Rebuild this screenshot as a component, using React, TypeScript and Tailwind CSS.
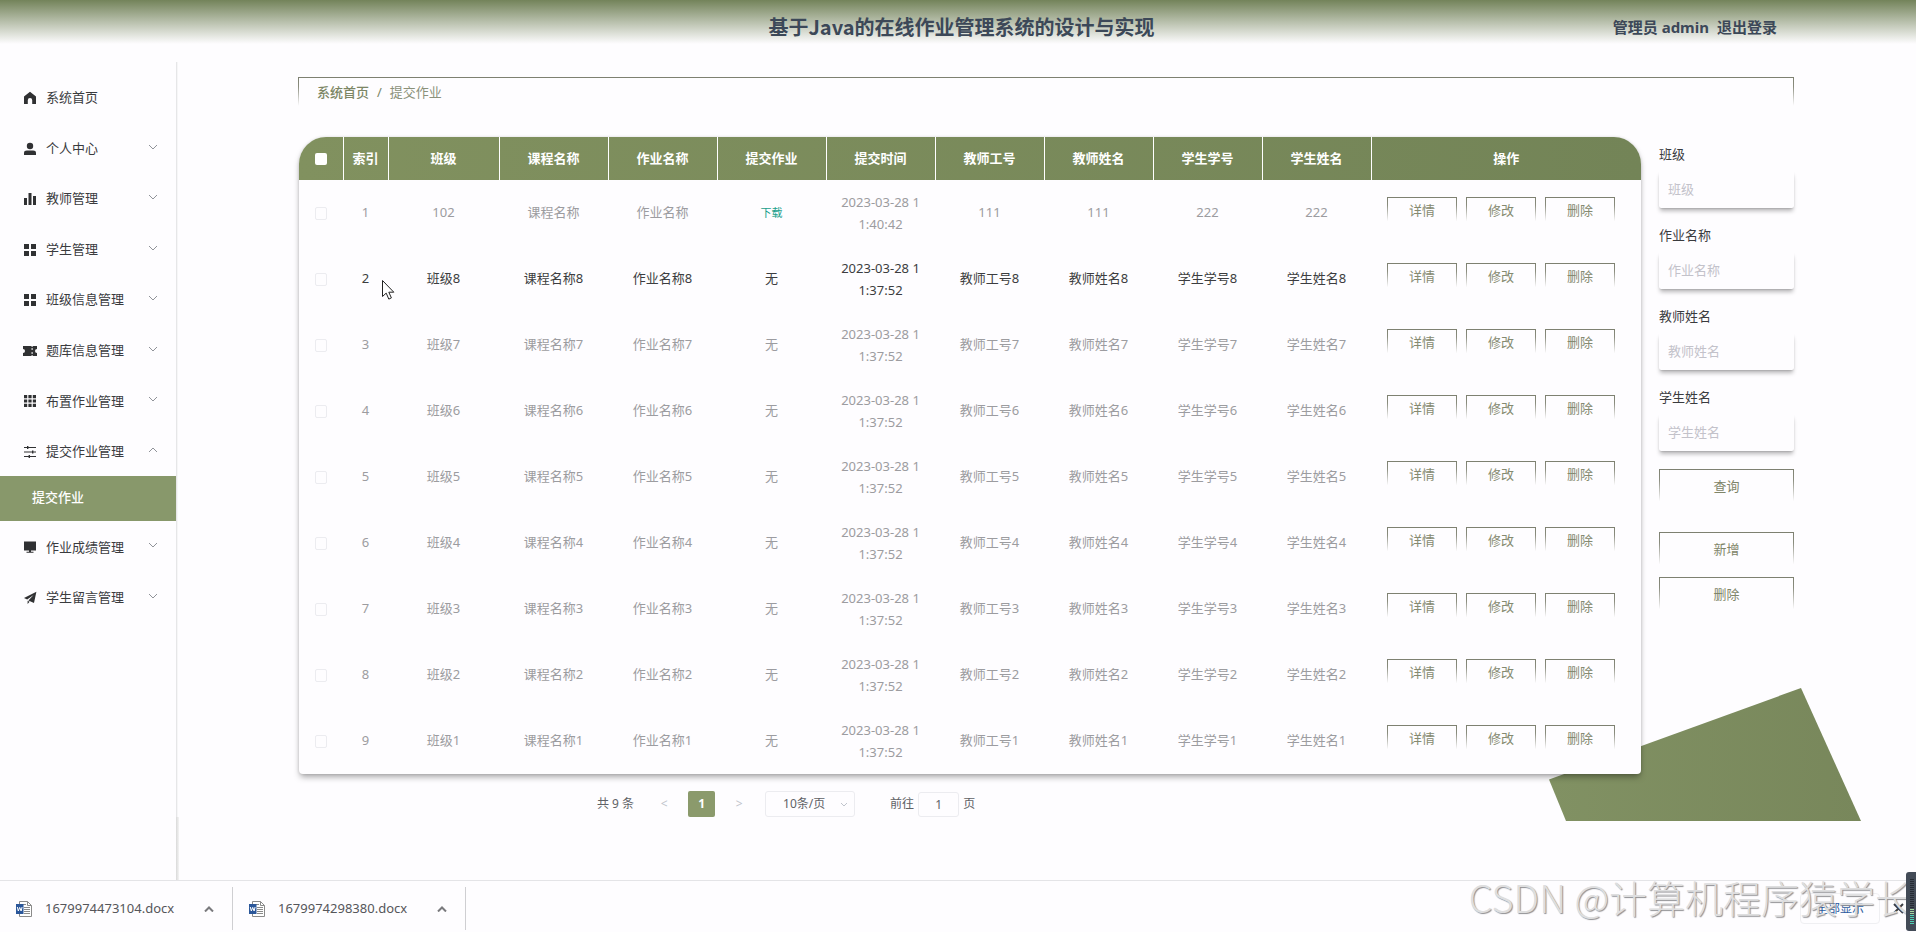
import { ReactNode, useState } from 'react';

interface MenuItem {
  label: string;
  icon: ReactNode;
  children?: string[];
  leaf?: boolean;
}

interface Homework {
  id: number;
  banji: string;
  kecheng: string;
  zuoye: string;
  file: boolean;
  time: string;
  gonghao: string;
  jiaoshi: string;
  xuehao: string;
  xuesheng: string;
}

const Icon = ({ children }: { children: ReactNode }) => (
  <svg viewBox="0 0 14 14" className="h-[14px] w-[14px] shrink-0 fill-[#303133]" aria-hidden="true">
    {children}
  </svg>
);

const GridIcon = () => (
  <Icon>
    <path d="M1 1h5v5H1zM8 1h5v5H8zM1 8h5v5H1zM8 8h5v5H8z" />
  </Icon>
);

const menu: MenuItem[] = [
  {
    label: '系统首页',
    leaf: true,
    icon: (
      <Icon>
        <path d="M7 .8 13 5.6V13H9.2V9.2a2.2 2.2 0 0 0-4.4 0V13H1V5.6z" />
      </Icon>
    ),
  },
  {
    label: '个人中心',
    icon: (
      <Icon>
        <circle cx="7" cy="4" r="3.2" />
        <path d="M1 13v-2.2C1 9.4 2.2 8.6 3.8 8.6h6.4c1.6 0 2.8.8 2.8 2.2V13z" />
      </Icon>
    ),
  },
  {
    label: '教师管理',
    icon: (
      <Icon>
        <path d="M1 6h3v7H1zM5.5 1h3v12h-3zM10 4h3v9h-3z" />
      </Icon>
    ),
  },
  { label: '学生管理', icon: <GridIcon /> },
  { label: '班级信息管理', icon: <GridIcon /> },
  {
    label: '题库信息管理',
    icon: (
      <Icon>
        <path d="M0 2h8.6v1h1V2H14v3a2 2 0 0 0 0 4v3H9.6v-1h-1v1H0V9a2 2 0 0 0 0-4zM8.6 4v2h1V4zM8.6 8v2h1V8z" fillRule="evenodd" />
      </Icon>
    ),
  },
  {
    label: '布置作业管理',
    icon: (
      <Icon>
        <path d="M1 1h3.2v3.2H1zM5.4 1h3.2v3.2H5.4zM9.8 1H13v3.2H9.8zM1 5.4h3.2v3.2H1zM5.4 5.4h3.2v3.2H5.4zM9.8 5.4H13v3.2H9.8zM1 9.8h3.2V13H1zM5.4 9.8h3.2V13H5.4zM9.8 9.8H13V13H9.8z" />
      </Icon>
    ),
  },
  {
    label: '提交作业管理',
    children: ['提交作业'],
    icon: (
      <Icon>
        <path d="M1 2h12v1H1zM1 6.5h12v1H1zM1 11h12v1H1zM4 1h1.4v3H4zM9 5.5h1.4v3H9zM5.6 10H7v3H5.6z" />
      </Icon>
    ),
  },
  {
    label: '作业成绩管理',
    icon: (
      <Icon>
        <path d="M1 1.5h12v9H1zM6 10.5h2v1.3h2.5v1h-7v-1H6z" />
      </Icon>
    ),
  },
  {
    label: '学生留言管理',
    icon: (
      <Icon>
        <path d="M13.4.8 1 7l3.2 1.6L10.6 4 5.4 9.4 11 12zM4.6 9.8V13l2-2.2z" />
      </Icon>
    ),
  },
];

const rows: Homework[] = [
  {
    id: 1,
    banji: '102',
    kecheng: '课程名称',
    zuoye: '作业名称',
    file: true,
    time: '2023-03-28 11:40:42',
    gonghao: '111',
    jiaoshi: '111',
    xuehao: '222',
    xuesheng: '222',
  },
  ...[8, 7, 6, 5, 4, 3, 2, 1].map((n, i) => ({
    id: i + 2,
    banji: `班级${n}`,
    kecheng: `课程名称${n}`,
    zuoye: `作业名称${n}`,
    file: false,
    time: '2023-03-28 11:37:52',
    gonghao: `教师工号${n}`,
    jiaoshi: `教师姓名${n}`,
    xuehao: `学生学号${n}`,
    xuesheng: `学生姓名${n}`,
  })),
];

const columns = ['班级', '课程名称', '作业名称', '提交作业', '提交时间', '教师工号', '教师姓名', '学生学号', '学生姓名'];
const filters = ['班级', '作业名称', '教师姓名', '学生姓名'];
const downloads = ['1679974473104.docx', '1679974298380.docx'];

const fadeBorder = 'border [border-image:linear-gradient(to_bottom,#7d8070_0%,#8a8c7e_30%,transparent_90%)_1]';

function Chevron({ up = false }: { up?: boolean }) {
  return (
    <svg viewBox="0 0 10 6" className="h-[6px] w-[10px] fill-none stroke-[#909399]" aria-hidden="true">
      <path d={up ? 'M1 5 5 1l4 4' : 'M1 1l4 4 4-4'} />
    </svg>
  );
}

function Sidebar() {
  return (
    <aside className="flex w-[179px] shrink-0">
      <nav className="flex-1 pt-[10px]">
        <ul className="flex h-[550px] flex-col justify-between">
          {menu.map((item) => (
            <li key={item.label}>
              <button type="button" className="flex h-[50px] w-full items-center gap-2 pt-[2px] pr-[18px] pl-[23px] text-[#3a3b3e]">
                {item.icon}
                <span className="ml-px">{item.label}</span>
                {!item.leaf && (
                  <span className="ml-auto pb-1">
                    <Chevron up={!!item.children} />
                  </span>
                )}
              </button>
              {item.children?.map((child) => (
                <a key={child} href="#" className="flex h-[45px] items-center bg-[#88986b] pb-[2px] pl-8 font-medium text-white">
                  {child}
                </a>
              ))}
            </li>
          ))}
        </ul>
      </nav>
      <div className="flex w-[3px] flex-col">
        <div className="w-[2px] flex-1 border-l border-[#e6e6e8] bg-[#f6f6f7]"></div>
        <div className="h-[63px] bg-linear-to-r from-[#d9d9d9] to-[#f4f4f4]"></div>
      </div>
    </aside>
  );
}

function HomeworkTable() {
  return (
    <div className="overflow-hidden rounded-t-[27px] rounded-b bg-[#fefdff] shadow-[0_4px_6px_-1px_rgba(0,0,0,0.34),0_0_3px_rgba(0,0,0,0.12)]">
      <table className="w-full table-fixed text-center">
        <colgroup>
          <col className="w-[44px]" />
          <col className="w-[45px]" />
          <col />
          {columns.slice(1).map((c) => (
            <col key={c} className="w-[109px]" />
          ))}
          <col className="w-[270px]" />
        </colgroup>
        <thead>
          <tr className="h-[43px] bg-linear-to-r from-[#81915f] to-[#738457] text-white">
            <th className="border-r border-white">
              <input
                type="checkbox"
                aria-label="全选"
                className="mx-auto mt-px block h-3 w-3 appearance-none rounded-xs bg-white"
              />
            </th>
            <th className="border-r border-white font-bold">索引</th>
            {columns.map((c) => (
              <th key={c} className="border-r border-white font-bold">{c}</th>
            ))}
            <th className="font-bold">操作</th>
          </tr>
        </thead>
        <tbody>
          {rows.map((row) => (
            <tr key={row.id} className={row.id === 2 ? 'h-[66px] text-[#3c3d40]' : 'h-[66px] text-[#9c9ca0]'}>
              <td>
                <input
                  type="checkbox"
                  aria-label={`选择 ${row.id}`}
                  className="mx-auto block h-[13px] w-3 appearance-none rounded-xs border border-[#ececf0]"
                />
              </td>
              <td>{row.id}</td>
              <td>{row.banji}</td>
              <td>{row.kecheng}</td>
              <td>{row.zuoye}</td>
              <td>
                {row.file ? <button type="button" className="text-[11px] text-[#1a9f8c]">下载</button> : '无'}
              </td>
              <td className="px-3 leading-[22px] break-all">{row.time}</td>
              <td>{row.gonghao}</td>
              <td>{row.jiaoshi}</td>
              <td>{row.xuehao}</td>
              <td>{row.xuesheng}</td>
              <td className="pb-[5px]">
                <div className="flex gap-[9px] pl-4 text-[#858a70]">
                  {['详情', '修改', '删除'].map((action) => (
                    <button key={action} type="button" className={`h-[27px] w-[70px] ${fadeBorder}`}>
                      {action}
                    </button>
                  ))}
                </div>
              </td>
            </tr>
          ))}
        </tbody>
      </table>
    </div>
  );
}

function Pagination() {
  const [page, setPage] = useState('1');

  return (
    <div className="mt-[17px] flex h-[26px] items-center pl-[298px] text-xs text-[#606266]">
      <span>共 9 条</span>
      <button type="button" aria-label="上一页" className="ml-[17px] w-[26px] text-[#c0c4cc]">&lt;</button>
      <button type="button" className="mx-[11px] h-[26px] w-[27px] rounded-xs bg-[#8b9a6c] font-bold text-white">1</button>
      <button type="button" aria-label="下一页" className="w-[26px] text-[#c0c4cc]">&gt;</button>
      <div className="relative ml-[13px]">
        <select
          aria-label="每页条数"
          className="h-[26px] w-[90px] appearance-none rounded-[3px] border border-[#ececf0] bg-transparent pl-[17px]"
        >
          <option>10条/页</option>
        </select>
        <svg viewBox="0 0 8 5" className="absolute top-[11px] right-[7px] h-[5px] w-2 fill-none stroke-[#c0c4cc]">
          <path d="M1 1l3 3 3-3" />
        </svg>
      </div>
      <label className="ml-[35px] flex items-center">
        前往
        <input
          value={page}
          onChange={(e) => setPage(e.target.value)}
          className="mx-1 h-[25px] w-[41px] rounded-[3px] border border-[#ececf0] text-center"
        />
        页
      </label>
    </div>
  );
}

function SearchPanel() {
  return (
    <form className="w-[135px] shrink-0 text-[#3a3b3e]" onSubmit={(e) => e.preventDefault()}>
      {filters.map((name) => (
        <div key={name} className="mb-[10px]">
          <label htmlFor={name} className="block leading-[34px]">{name}</label>
          <input
            id={name}
            placeholder={name}
            className="block h-[37px] w-full rounded-xs px-[9px] pb-[2px] shadow-[0_4px_4px_-1px_rgba(0,0,0,0.28),0_1px_2px_-1px_rgba(0,0,0,0.3)] placeholder:text-[#c3c2ca]"
          />
        </div>
      ))}
      <div className="flex flex-col pt-2 text-[#7f8568]">
        <button type="submit" className={`h-[36px] ${fadeBorder}`}>查询</button>
        <button type="button" className={`mt-[27px] h-[36px] ${fadeBorder}`}>新增</button>
        <button type="button" className={`mt-[9px] h-[36px] ${fadeBorder}`}>删除</button>
      </div>
    </form>
  );
}

function WordIcon() {
  return (
    <svg viewBox="0 0 16 16" className="h-4 w-4" aria-hidden="true">
      <path d="M3.5.5h8l4 4v11h-12z" fill="#fff" stroke="#8a8a8a" />
      <path d="M11.5.5v4h4" fill="none" stroke="#8a8a8a" />
      <path d="M8 6.5h6M8 8.5h6M8 10.5h6M8 12.5h6M6 3.5h4" stroke="#8a8a8a" />
      <path d="M0 3h7.5v10H0z" fill="#2b579a" />
      <path d="m1.3 6 1 4 1.4-3.6L5.1 10l1-4" fill="none" stroke="#fff" />
    </svg>
  );
}

function DownloadBar() {
  return (
    <footer className="relative flex h-[52px] items-center border-t border-[#e4e4e7] text-[13px] text-[#55565a]">
      {downloads.map((name) => (
        <div key={name} className="mt-1 flex h-[43px] w-[233px] items-center border-r border-[#cfcfd2] pr-[18px] pl-4">
          <WordIcon />
          <a href="#" className="ml-[13px]">{name}</a>
          <button type="button" aria-label="更多" className="ml-auto">
            <svg viewBox="0 0 10 6" className="h-[6px] w-[10px] fill-none stroke-[#7a7a7d] stroke-2">
              <path d="M1 5.5 5 1.5l4 4" />
            </svg>
          </button>
        </div>
      ))}
      <button type="button" className="mt-1 ml-auto h-[31px] w-20 rounded border border-[#efeff2] text-xs text-[#2a5a9e]">
        全部显示
      </button>
      <button type="button" aria-label="关闭" className="mt-1 mr-3 ml-[13px]">
        <svg viewBox="0 0 11 11" className="h-[11px] w-[11px] fill-none stroke-[#3c3f45] stroke-2">
          <path d="m1 1 9 9M10 1l-9 9" />
        </svg>
      </button>
      <p className="pointer-events-none absolute right-[3px] bottom-[7px] font-['Noto_Sans_CJK_SC',sans-serif] text-[38px] leading-[56px] font-light whitespace-nowrap text-[#dededf] [text-shadow:1px_1px_1px_#8f8f93]">
        CSDN @计算机程序猿学长
      </p>
      <svg viewBox="0 0 10 59" className="absolute right-0 bottom-px h-[59px] w-[10px]" aria-hidden="true">
        <path d="M10 0H3a3 3 0 0 0-3 3v53a3 3 0 0 0 3 3h7z" fill="#434b57" />
        <path d="M6 7v29" stroke="#252b33" strokeWidth="4" strokeDasharray="1 1" />
        <path d="M6 37v5" stroke="#a5d6a0" strokeWidth="4" strokeDasharray="1 1" />
        <path d="M6 43v10" stroke="#4fd0b4" strokeWidth="4" strokeDasharray="1 1" />
      </svg>
    </footer>
  );
}

export default function App() {
  return (
    <div className="flex min-h-screen flex-col bg-[#fefdff] font-['Noto_Sans','Noto_Sans_CJK_SC',sans-serif] text-[13px]">
      <header className="grid h-[62px] grid-cols-[1fr_auto_1fr] items-center bg-[linear-gradient(to_bottom,#73835a_0px,#fefdff_44px)] pb-2 font-bold text-[#3c4858]">
        <h1 className="col-start-2 pl-[7px] font-['Noto_Sans_CJK_SC',sans-serif] text-xl">
          基于Java的在线作业管理系统的设计与实现
        </h1>
        <div className="flex justify-end gap-2 pr-[139px] text-[15px]">
          <span>管理员 admin</span>
          <a href="#">退出登录</a>
        </div>
      </header>

      <div className="flex flex-1">
        <Sidebar />
        <main className="relative isolate flex-1 pt-[15px] pr-[122px] pl-[119px]">
          <svg viewBox="0 0 312 133" className="absolute right-[55px] bottom-[59px] -z-10 h-[133px] w-[312px]" aria-hidden="true">
            <defs>
              <linearGradient id="leaf">
                <stop offset="0" stopColor="#819163" />
                <stop offset="1" stopColor="#78875b" />
              </linearGradient>
            </defs>
            <path d="M0 91.5 252 0l60 133H17z" fill="url(#leaf)" />
          </svg>

          <nav className={`flex h-[32px] items-center gap-2 px-[18px] text-[#7c8665] ${fadeBorder}`}>
            <a href="#" className="font-medium">系统首页</a>
            <span>/</span>
            <span className="text-[#8b917a]">提交作业</span>
          </nav>

          <div className="mt-[28px] flex gap-[18px]">
            <div className="min-w-0 flex-1 pl-px">
              <HomeworkTable />
              <Pagination />
            </div>
            <SearchPanel />
          </div>

          {/* mouse pointer */}
          <svg viewBox="0 0 13 20" className="absolute top-[218px] left-[203px] h-5 w-[13px]" aria-hidden="true">
            <path d="M.5.5v16l3.7-3.4 2.6 6 2.6-1.2-2.6-5.7h5z" fill="#fff" stroke="#222" />
          </svg>
        </main>
      </div>

      <DownloadBar />
    </div>
  );
}
